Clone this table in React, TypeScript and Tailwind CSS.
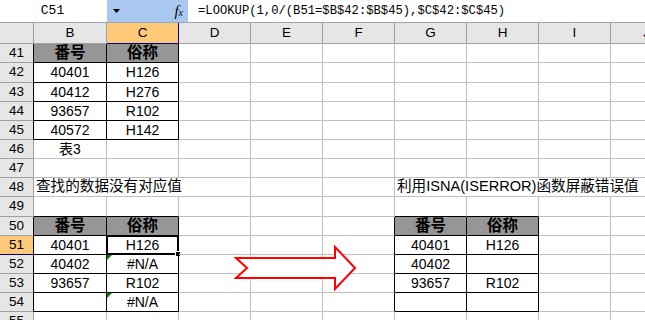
import type { ReactNode } from "react";

const COLS = ["B", "C", "D", "E", "F", "G", "H", "I", "J"] as const;

const ROWS = [
  { n: 41, tall: false },
  { n: 42, tall: true },
  { n: 43, tall: false },
  { n: 44, tall: false },
  { n: 45, tall: false },
  { n: 46, tall: false },
  { n: 47, tall: false },
  { n: 48, tall: false },
  { n: 49, tall: true },
  { n: 50, tall: false },
  { n: 51, tall: false },
  { n: 52, tall: false },
  { n: 53, tall: false },
  { n: 54, tall: false },
  { n: 55, tall: false },
];

type Cell = {
  text?: string;
  head?: boolean;
  left?: boolean;
  span?: 3 | 4;
  error?: boolean;
};

const CELLS: Record<string, Cell> = {
  B41: { text: "番号", head: true },
  C41: { text: "俗称", head: true },
  B42: { text: "40401" },
  C42: { text: "H126" },
  B43: { text: "40412" },
  C43: { text: "H276" },
  B44: { text: "93657" },
  C44: { text: "R102" },
  B45: { text: "40572" },
  C45: { text: "H142" },
  B46: { text: "表3" },
  B48: { text: "查找的数据没有对应值", left: true, span: 3 },
  G48: { text: "利用ISNA(ISERROR)函数屏蔽错误值", left: true, span: 4 },
  B50: { text: "番号", head: true },
  C50: { text: "俗称", head: true },
  B51: { text: "40401" },
  C51: { text: "H126" },
  B52: { text: "40402" },
  C52: { text: "#N/A", error: true },
  B53: { text: "93657" },
  C53: { text: "R102" },
  C54: { text: "#N/A", error: true },
  G50: { text: "番号", head: true },
  H50: { text: "俗称", head: true },
  G51: { text: "40401" },
  H51: { text: "H126" },
  G52: { text: "40402" },
  G53: { text: "93657" },
  H53: { text: "R102" },
};

// bordered ranges: [firstCol, lastCol, firstRow, lastRow]
const TABLES: [number, number, number, number][] = [
  [0, 1, 41, 45],
  [0, 1, 50, 54],
  [5, 6, 50, 54],
];

function inTable(col: number, row: number) {
  return TABLES.some(([c0, c1, r0, r1]) => col >= c0 && col <= c1 && row >= r0 && row <= r1);
}

function FormulaBar() {
  return (
    <div className="flex h-[23px] border-b border-[#9aa6b8] font-['Liberation_Mono',monospace] text-[13px] text-black">
      <div className="flex w-[107px] items-center justify-center bg-white pr-[2px]">C51</div>
      <div className="relative flex w-[81px] items-center bg-[#a9c8ef]">
        <svg className="ml-[6px]" width="7" height="4" viewBox="0 0 7 4">
          <polygon points="0,0 7,0 3.5,4" fill="#000" />
        </svg>
        <span className="ml-auto mr-[5px] font-['Liberation_Serif',serif] text-[15px] italic leading-none">
          f<span className="text-[10px]">x</span>
        </span>
      </div>
      <div className="flex flex-1 items-center bg-white pl-[10px] text-[12.2px]">
        =LOOKUP(1,0/(B51=$B$42:$B$45),$C$42:$C$45)
      </div>
    </div>
  );
}

function ColumnHeaders() {
  return (
    <>
      <div className="h-[21px] border-b border-r border-[#a0a0a0] bg-[#e6e6e6]" />
      {COLS.map((c) =>
        c === "C" ? (
          <div
            key={c}
            className="flex h-[21px] items-center justify-center border-b border-r border-[#000080] bg-[#ffc97a] text-[13.5px]"
          >
            {c}
          </div>
        ) : (
          <div
            key={c}
            className="flex h-[21px] items-center justify-center border-b border-r border-[#a0a0a0] bg-[#e6e6e6] text-[13.5px]"
          >
            {c}
          </div>
        ),
      )}
    </>
  );
}

function RowHeader({ n, tall }: { n: number; tall: boolean }) {
  const right = inTable(0, n) ? "border-r-black" : "border-r-[#a0a0a0]";
  const height = tall ? "h-[20px]" : "h-[19px]";
  if (n === 51) {
    return (
      <div
        className={`flex ${height} items-center justify-center border-b border-r border-b-[#000080] bg-[#ffc97a] text-[13.5px] ${right}`}
      >
        {n}
      </div>
    );
  }
  return (
    <div
      className={`flex ${height} items-center justify-center border-b border-r border-b-[#a0a0a0] bg-[#e6e6e6] text-[13.5px] ${right}`}
    >
      {n}
    </div>
  );
}

function ErrorFlag() {
  return (
    <span className="absolute left-0 top-0 h-0 w-0 border-r-[5px] border-t-[5px] border-r-transparent border-t-[#008000]" />
  );
}

function Selection() {
  return (
    <span className="pointer-events-none absolute -left-[1px] -top-[1px] bottom-[-1px] right-[-1px] border-2 border-black">
      <span className="absolute -bottom-[4px] -right-[4px] h-[6px] w-[6px] border border-white bg-black" />
    </span>
  );
}

function SheetRow({ n, tall }: { n: number; tall: boolean }) {
  const cells: ReactNode[] = [];
  const height = tall ? "h-[20px]" : "h-[19px]";
  for (let i = 0; i < COLS.length; i++) {
    const key = `${COLS[i]}${n}`;
    const cell = CELLS[key] ?? {};
    const last = i + (cell.span ?? 1) - 1;
    const right = inTable(last, n) || inTable(last + 1, n) ? "border-r-black" : "border-r-[#c0c0c0]";
    const bottom = inTable(i, n) || inTable(i, n + 1) ? "border-b-black" : "border-b-[#c0c0c0]";
    const span = cell.span === 3 ? "col-span-3" : cell.span === 4 ? "col-span-4" : "";
    const fill = cell.head ? "bg-[#969696] font-bold text-[15.5px]" : "";
    const align = cell.left ? "justify-start pl-[2px] text-[14.6px]" : "justify-center";
    cells.push(
      <div
        key={key}
        className={`relative flex ${height} items-center whitespace-nowrap border-b border-r ${right} ${bottom} ${span} ${fill} ${align}`}
      >
        {cell.error ? <ErrorFlag /> : null}
        {cell.text}
        {key === "C51" ? <Selection /> : null}
      </div>,
    );
    i = last;
  }
  return (
    <>
      <RowHeader n={n} tall={tall} />
      {cells}
    </>
  );
}

function BlockArrow() {
  return (
    <svg className="absolute left-[233px] top-[244px]" width="126" height="48" viewBox="233 244 126 48">
      <polygon
        points="236,258 335,258 335,247 355,268 335,289 335,278 236,278 247,268"
        fill="#fff"
        stroke="#ff0000"
        strokeWidth="2"
      />
    </svg>
  );
}

export default function App() {
  return (
    <div className="relative h-[320px] w-[645px] overflow-hidden bg-white font-['Liberation_Sans','Noto_Sans_CJK_SC',sans-serif] text-black">
      <FormulaBar />
      <div className="grid grid-cols-[34px_73px_72px_72px_72px_72px_72px_72px_72px_72px] text-[14px]">
        <ColumnHeaders />
        {ROWS.map((r) => (
          <SheetRow key={r.n} n={r.n} tall={r.tall} />
        ))}
      </div>
      <BlockArrow />
    </div>
  );
}
